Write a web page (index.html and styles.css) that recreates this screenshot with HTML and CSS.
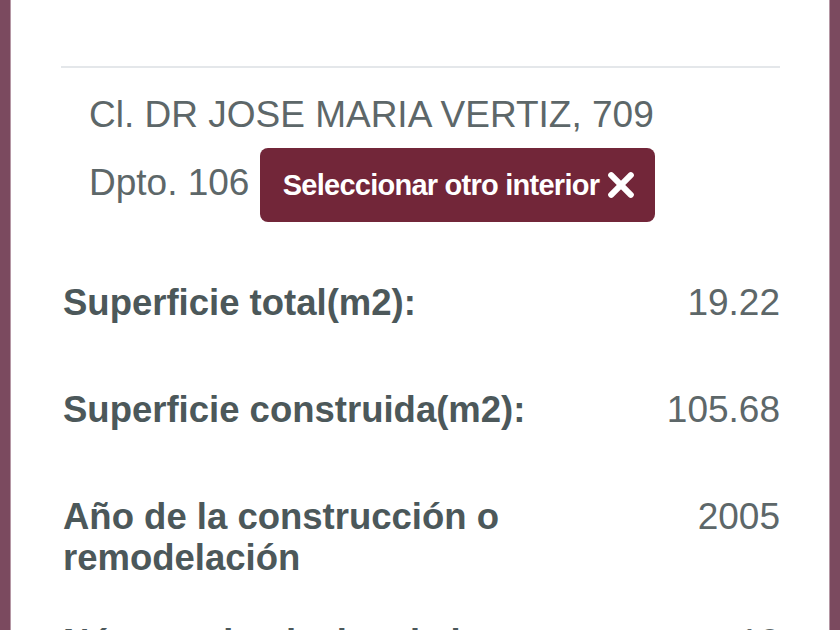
FILE: index.html
```html
<!DOCTYPE html>
<html lang="es">
<head>
<meta charset="utf-8">
<title>Detalle del predio</title>
<link rel="stylesheet" href="styles.css">
</head>
<body>
<div class="panel">
  <div class="divider"></div>
  <div class="address">
    <div class="addr-line">Cl. DR JOSE MARIA VERTIZ, 709</div>
    <div class="addr-line addr-unit">Dpto. 106 <button class="btn-other" type="button"><span>Seleccionar otro interior</span><svg class="icon-x" viewBox="0 0 24 24" aria-hidden="true"><path d="M3.6 3.6 L20.4 20.4 M20.4 3.6 L3.6 20.4"/></svg></button></div>
  </div>
  <div class="rows">
    <div class="row">
      <div class="label">Superficie total(m2):</div>
      <div class="value">19.22</div>
    </div>
    <div class="row">
      <div class="label">Superficie construida(m2):</div>
      <div class="value">105.68</div>
    </div>
    <div class="row">
      <div class="label">Año de la construcción o remodelación</div>
      <div class="value">2005</div>
    </div>
    <div class="row">
      <div class="label">Número de niveles de la construcción:</div>
      <div class="value">10</div>
    </div>
  </div>
</div>
</body>
</html>
```

FILE: styles.css
```css
html, body {
  margin: 0;
  padding: 0;
  height: 100%;
  overflow: hidden;
}

body {
  background: #7b4a5f;
  font-family: "Liberation Sans", Arial, sans-serif;
}

.panel {
  box-sizing: border-box;
  margin: 0 10px;
  min-height: 100vh;
  background: #ffffff;
  border-left: 1px solid #b597a4;
  border-right: 1px solid #b597a4;
  padding: 66px 49px 0 50px;
}

.divider {
  height: 2px;
  background: #e4e7ea;
}

.address {
  margin-top: 26px;
  padding-left: 28px;
  font-size: 37px;
  line-height: 41px;
  color: #5d6769;
}

.addr-line {
  white-space: nowrap;
}

.addr-unit {
  margin-top: 13px;
}

.btn-other {
  display: inline-flex;
  align-items: center;
  gap: 8px;
  vertical-align: middle;
  box-sizing: border-box;
  height: 74px;
  margin: 0;
  padding: 0 20px 0 23px;
  border: 0;
  border-radius: 8px;
  background: #722639;
  color: #ffffff;
  font-family: "Liberation Sans", Arial, sans-serif;
  font-weight: bold;
  font-size: 29px;
  letter-spacing: -0.75px;
  cursor: pointer;
}

.icon-x {
  width: 28px;
  height: 28px;
  flex: none;
}

.icon-x path {
  fill: none;
  stroke: #ffffff;
  stroke-width: 5.2;
  stroke-linecap: round;
}

.rows {
  margin-top: 60px;
}

.row {
  box-sizing: border-box;
  display: flex;
  justify-content: space-between;
  align-items: flex-start;
  gap: 24px;
  min-height: 107px;
  padding-bottom: 44px;
  font-size: 36.5px;
  line-height: 41px;
}

.label {
  max-width: 470px;
  padding-left: 2px;
  font-weight: bold;
  color: #4c585a;
}

.value {
  font-size: 37px;
  text-align: right;
  white-space: nowrap;
  color: #5d6769;
}
```
